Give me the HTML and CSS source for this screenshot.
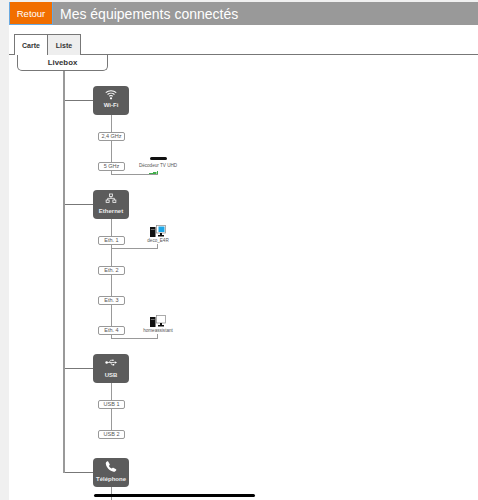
FILE: index.html
```html
<!DOCTYPE html>
<html lang="fr">
<head>
  <meta charset="UTF-8" />
  <meta name="viewport" content="width=device-width, initial-scale=1.0" />
  <title>Mes équipements connectés</title>
  <link rel="stylesheet" href="styles.css">
</head>
<body>
  <div class="page">
    <header>
      <button class="back">Retour</button>
      <h1>Mes équipements connectés</h1>
    </header>

    <div class="tabs">
      <span class="tab active">Carte</span>
      <span class="tab">Liste</span>
    </div>
    <div class="root">Livebox</div>

    <div class="tree">
      <section>
        <div class="hub-row">
          <div class="branch"></div>
          <div class="hub hub-wifi">
            <svg viewBox="0 0 16 14" width="12" height="11" fill="none" stroke="#fff" stroke-width="1.4">
              <path d="M1 4.6C5 1 11 1 15 4.6" />
              <path d="M3.4 7C6 4.7 10 4.7 12.6 7" />
              <path d="M5.7 9.3C7 8.2 9 8.2 10.3 9.3" />
              <circle cx="8" cy="12" r="1.5" fill="#fff" stroke="none" />
            </svg>
            <span>Wi-Fi</span>
          </div>
        </div>
        <div class="ports">
          <div class="port-row"><div class="port">2,4 GHz</div></div>
          <div class="port-row">
            <div class="port">5 GHz</div>
            <div class="device">
              <div class="decoder"></div>
              <div class="device-name">Décodeur TV UHD</div>
              <div class="link short">
                <svg class="signal" viewBox="0 0 9 3" width="9" height="3">
                  <path d="M0 3V2h2v1zM2 3V2h2v1zM4 3V1h2v2zM6 3V1h1.5v2zM8 3V0h1v3z" fill="#3fae49" />
                </svg>
              </div>
            </div>
          </div>
        </div>
      </section>

      <section>
        <div class="hub-row">
          <div class="branch"></div>
          <div class="hub">
            <svg viewBox="0 0 16 14" width="12" height="11" fill="none" stroke="#fff" stroke-width="1">
              <rect x="6" y="1" width="4" height="3.4" />
              <rect x="1.5" y="9" width="4" height="3.4" />
              <rect x="10.5" y="9" width="4" height="3.4" />
              <path d="M8 4.4V6.8M3.5 9V6.8H12.5V9" />
            </svg>
            <span>Ethernet</span>
          </div>
        </div>
        <div class="ports">
          <div class="port-row">
            <div class="port">Eth. 1</div>
            <div class="device">
              <svg class="computer" viewBox="0 0 16 12" width="16" height="12">
                <rect x="0" y="2" width="5.5" height="10" fill="#111" />
                <rect x="0.8" y="4" width="3.9" height="0.8" fill="#888" />
                <rect x="6.5" y="0.5" width="9" height="7.5" fill="#fff" stroke="#888" stroke-width="0.7" />
                <rect x="8.5" y="1.5" width="6" height="5.5" fill="#1ea7e8" />
                <path d="M10 8h2v2h2v1.6H8V10h2z" fill="#111" />
              </svg>
              <div class="device-name">deco_E4R</div>
              <div class="link"></div>
            </div>
          </div>
          <div class="port-row"><div class="port">Eth. 2</div></div>
          <div class="port-row"><div class="port">Eth. 3</div></div>
          <div class="port-row">
            <div class="port">Eth. 4</div>
            <div class="device">
              <svg class="computer" viewBox="0 0 16 12" width="16" height="12">
                <rect x="0" y="2" width="5.5" height="10" fill="#111" />
                <rect x="0.8" y="4" width="3.9" height="0.8" fill="#888" />
                <rect x="6.5" y="0.5" width="9" height="7.5" fill="#fff" stroke="#888" stroke-width="0.7" />
                <path d="M10 8h2v2h2v1.6H8V10h2z" fill="#111" />
              </svg>
              <div class="device-name">homeassistant</div>
              <div class="link"></div>
            </div>
          </div>
        </div>
      </section>

      <section>
        <div class="hub-row">
          <div class="branch"></div>
          <div class="hub">
            <svg viewBox="0 0 16 14" width="12" height="11" fill="#fff" stroke="#fff">
              <path d="M3 7H13" stroke-width="1" />
              <circle cx="2.2" cy="7" r="1.7" stroke="none" />
              <path d="M13 5.2L16 7L13 8.8Z" stroke="none" />
              <path d="M5.5 7L7.5 4H10M7.5 7L9 10H10.5" fill="none" stroke-width="0.9" />
              <circle cx="10.6" cy="4" r="1.1" stroke="none" />
              <rect x="10.3" y="9" width="2" height="2" stroke="none" />
            </svg>
            <span>USB</span>
          </div>
        </div>
        <div class="ports ports-end">
          <div class="port-row"><div class="port">USB 1</div></div>
          <div class="port-row"><div class="port">USB 2</div></div>
        </div>
      </section>

      <section>
        <div class="hub-row">
          <div class="branch"></div>
          <div class="hub">
            <svg viewBox="0 0 14 14" width="12" height="11" fill="#fff">
              <path d="M3.4 0.6L5.4 4.2C5.6 4.6 5.5 5 5.2 5.3L4.3 6.1C5 7.7 6.3 9 7.9 9.7L8.8 8.8C9.1 8.5 9.5 8.4 9.9 8.6L13.4 10.6C13.8 10.9 13.9 11.3 13.7 11.7C13 13 11.8 13.8 10.4 13.6C5.6 13 1 8.4 0.4 3.6C0.2 2.2 1 1 2.3 0.3C2.7 0.1 3.2 0.2 3.4 0.6Z" />
            </svg>
            <span>Téléphone</span>
          </div>
        </div>
        <div class="ports tail"></div>
      </section>
    </div>
  </div>
  <div class="home-bar"></div>
</body>
</html>
```

FILE: styles.css
```css
* {
  box-sizing: border-box;
}
html, body {
  height: 500px;
  overflow: hidden;
}
body {
  margin: 0;
  font-family: 'Liberation Sans', Arial, sans-serif;
  background: #f0f0f0;
  color: #333;
}
.page {
  margin: 2px 0 0 9px;
  height: 498px;
  background: #fff;
}
header {
  display: flex;
  height: 23px;
  background: #999;
  align-items: center;
}
.back {
  width: 44px;
  height: 23px;
  padding: 0;
  background: #f16e00;
  color: #fff;
  border: none;
  border-left: 1px solid #6aa9e0;
  border-right: 1px solid #6aa9e0;
  border-bottom: 1px solid #6aa9e0;
  font-family: inherit;
  font-size: 9.5px;
}
header h1 {
  margin: 0 0 0 7px;
  font-size: 14px;
  font-weight: 400;
  color: #fff;
}
.tabs {
  display: flex;
  height: 21px;
  margin-top: 9px;
  padding-left: 5px;
  border-bottom: 1px solid #777;
}
.tab {
  width: 33px;
  height: 21px;
  line-height: 21px;
  text-align: center;
  font-size: 7px;
  font-weight: 700;
  background: #eee;
  border: 1px solid #777;
  border-bottom: none;
  border-left: none;
}
.tab.active {
  width: 34px;
  background: #fff;
  border-left: 1px solid #777;
}
.root {
  width: 91px;
  height: 16px;
  margin-left: 8px;
  line-height: 15px;
  text-align: center;
  font-size: 7.8px;
  font-weight: 700;
  border: 1px solid #777;
  border-top: none;
  border-radius: 0 0 5px 5px;
}
.tree {
  height: 402px;
  margin-left: 54px;
  padding-top: 15px;
  border-left: 2px solid #999;
}
section {
  margin-bottom: 15px;
}
.hub-row {
  display: flex;
  align-items: center;
}
.branch {
  width: 28px;
  height: 1px;
  background: #777;
}
.hub {
  display: flex;
  flex-direction: column;
  align-items: center;
  gap: 3px;
  width: 36px;
  height: 29px;
  padding-top: 3px;
  background: #5c5c5c;
  border-radius: 4px;
  color: #eee;
  font-size: 6px;
  line-height: 8px;
  font-weight: 700;
}
.hub-wifi {
  gap: 1px;
}
.hub svg {
  display: block;
}
.hub span {
  white-space: nowrap;
}
.ports {
  margin-left: 46px;
  border-left: 1px solid #999;
}
.ports-end {
  height: 52px;
  margin-bottom: 23px;
}
.tail {
  height: 20px;
}
.port-row {
  display: flex;
  height: 30px;
}
.port {
  width: 27px;
  height: 9px;
  margin: 17px 0 0 -14px;
  line-height: 7px;
  text-align: center;
  font-size: 5.5px;
  color: #555;
  background: #fff;
  border: 1px solid #999;
  border-radius: 2px;
}
.device {
  display: flex;
  flex-direction: column;
  align-items: center;
  align-self: flex-end;
  width: 60px;
  margin-left: 3px;
}
.device-name {
  margin-top: 1px;
  font-size: 4.6px;
  line-height: 6px;
  white-space: nowrap;
  color: #555;
}
.decoder {
  width: 17px;
  height: 3px;
  margin-bottom: 2px;
  background: #111;
  border-radius: 2px;
}
.computer {
  display: block;
}
.link {
  align-self: flex-start;
  display: flex;
  justify-content: flex-end;
  width: 47px;
  height: 5px;
  margin-left: -17px;
  border-right: 1px solid #999;
  border-bottom: 1px solid #999;
}
.link.short {
  height: 6px;
  border-right: none;
}
.signal {
  display: block;
  margin-top: 2px;
}
.home-bar {
  position: absolute;
  left: 94px;
  top: 494px;
  width: 161px;
  height: 3px;
  background: #000;
  border-radius: 2px;
}
```
